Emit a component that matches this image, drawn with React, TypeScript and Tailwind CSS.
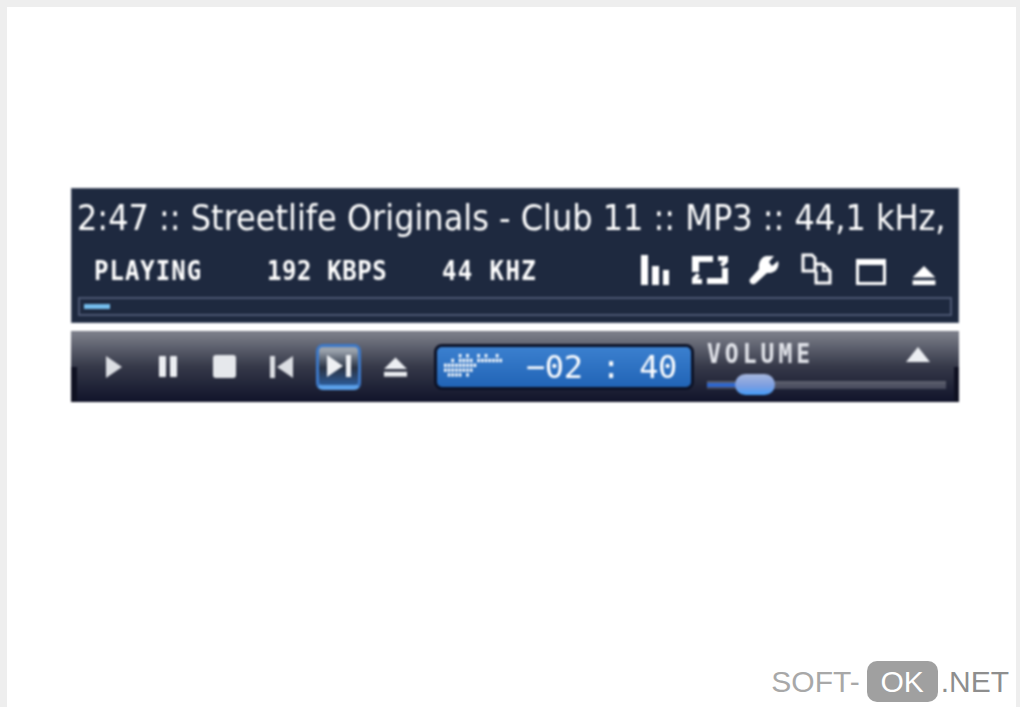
const BarsIcon = () => (
  <svg width="30" height="30" viewBox="0 0 30 30" fill="#ffffff">
    <rect x="1" y="0" width="7" height="30" />
    <rect x="12" y="11" width="7" height="19" />
    <rect x="23" y="15" width="6" height="15" />
  </svg>
);

const RepeatIcon = () => (
  <svg width="38" height="30" viewBox="0 0 38 30" fill="#ffffff">
    <path d="M1 1h21v6H8v10H1z" />
    <path d="M37 29H16v-6h15V13h6z" />
    <path d="M27 1h10v6l-5 5-3-3 3-3h-5z" />
    <path d="M11 29H1v-6l5-5 3 3-3 3h5z" />
  </svg>
);

const WrenchIcon = () => (
  <svg width="32" height="30" viewBox="0 0 32 30" fill="#ffffff">
    <path d="M18 1h8l-5 6 3 4 6-5c2 7-3 13-11 12L8 28c-3 3-8 0-6-4l9-10c-1-6 2-12 7-13z" />
  </svg>
);

const CopyIcon = () => (
  <svg width="32" height="32" viewBox="0 0 32 32" fill="none" stroke="#ffffff" strokeWidth="3">
    <path d="M2 2h9l3 3v13H2z" />
    <path d="M14 11h8l7 7v12H15v-12" />
    <path d="M22 11v7h7" strokeWidth="2" />
  </svg>
);

const WindowIcon = () => (
  <svg width="30" height="26" viewBox="0 0 30 26" fill="none" stroke="#ffffff">
    <rect x="1.5" y="1.5" width="27" height="23" strokeWidth="3" />
    <path d="M1 4.5h28" strokeWidth="3" />
  </svg>
);

const EjectIcon = ({ w, h, fill }: { w: number; h: number; fill: string }) => (
  <svg width={w} height={h} viewBox="0 0 24 20" fill={fill}>
    <path d="M12 0l12 12H0z" />
    <rect x="0" y="15" width="24" height="5" />
  </svg>
);

const PlayIcon = () => (
  <svg width="17" height="24" viewBox="0 0 17 24" fill="#dcdee3">
    <path d="M1 1l16 11L1 23z" />
  </svg>
);

const PauseIcon = () => (
  <svg width="20" height="23" viewBox="0 0 20 23" fill="#eceef2">
    <rect x="1" y="1" width="7" height="21" rx="1" />
    <rect x="12" y="1" width="7" height="21" rx="1" />
  </svg>
);

const StopIcon = () => (
  <svg width="23" height="23" viewBox="0 0 23 23" fill="#e6e8ec">
    <rect x="0" y="0" width="23" height="23" rx="3" />
  </svg>
);

const PrevIcon = () => (
  <svg width="24" height="24" viewBox="0 0 24 24" fill="#dcdee3">
    <rect x="0" y="1" width="5" height="22" />
    <path d="M23 1v22L7 12z" />
  </svg>
);

const NextIcon = () => (
  <svg width="26" height="24" viewBox="0 0 26 24" fill="#eef0f3">
    <path d="M1 1l16 11L1 23z" />
    <rect x="20" y="1" width="5" height="22" />
  </svg>
);

// start row and dot count for each column of the little wave form
const waveCols = [
  [2, 2], [2, 3], [1, 4], [2, 3], [0, 5], [1, 3], [0, 5], [1, 3], [2, 1],
  [0, 2], [1, 1], [0, 2], [1, 1], [1, 1], [0, 2], [1, 1],
];

const WaveDots = () => (
  <svg width="58" height="26" viewBox="0 0 58 26" fill="#ffffff">
    {waveCols.map(([start, count], i) =>
      Array.from({ length: count }).map((_, j) => (
        <rect key={`${i}-${j}`} x={i * 3.7} y={(start + j) * 4.8} width="2.6" height="3.4" />
      ))
    )}
  </svg>
);

export default function App() {
  return (
    <div className="w-[1020px] h-[707px] bg-white border-t-[7px] border-l-[7px] border-r-[4px] border-[#eeeeee] flex flex-col overflow-hidden font-['Liberation_Sans',sans-serif]">
      {/* player */}
      <div className="mt-[181px] ml-[64px] w-[888px] flex flex-col gap-[8px] blur-[0.8px]">
        <div className="h-[135px] bg-[#1e293f] border border-[#4a5468] px-[5px] flex flex-col">
          <div className="h-[58px] flex items-center text-white whitespace-nowrap font-['DejaVu_Sans',sans-serif] text-[32px] leading-none scale-y-[1.12]">
            2:47 :: Streetlife Originals - Club 11 :: MP3 :: 44,1 kHz,
          </div>
          <div className="h-[50px] flex items-center text-white font-['DejaVu_Sans_Mono',monospace] font-bold text-[24px] leading-none">
            <span className="ml-[17px] w-[173px] tracking-[1px] scale-y-[1.1] origin-left -mt-[3px]">PLAYING</span>
            <span className="w-[175px] tracking-[0.6px] scale-y-[1.1] origin-left -mt-[3px]">192 KBPS</span>
            <span className="tracking-[1.4px] scale-y-[1.1] origin-left -mt-[3px]">44 KHZ</span>
            <div className="ml-auto mr-[17px] mb-[6px] flex items-end">
              <BarsIcon />
              <div className="ml-[21px]"><RepeatIcon /></div>
              <div className="ml-[19px]"><WrenchIcon /></div>
              <div className="ml-[21px]"><CopyIcon /></div>
              <div className="ml-[23px]"><WindowIcon /></div>
              <div className="ml-[26px]"><EjectIcon w={24} h={19} fill="#ffffff" /></div>
            </div>
          </div>
          <div className="h-[19px] mx-[1px] border-2 border-[#4c5772] flex items-center px-[4px]">
            <div className="w-[26px] h-[5px] bg-[#74bcec]" />
          </div>
        </div>

        <div className="relative h-[71px] bg-gradient-to-b from-[#7a7d88] from-[4%] via-[#363949] via-[50%] to-[#11142a] flex items-center">
          {/* darker step at both ends of the bar */}
          <div className="absolute left-0 bottom-0 w-[6px] h-[35px] bg-[#0f1122]" />
          <div className="absolute right-0 bottom-0 w-[5px] h-[35px] bg-[#0f1122]" />
          <div className="relative ml-[34px] flex items-center">
            <PlayIcon />
            <div className="ml-[36px]"><PauseIcon /></div>
            <div className="ml-[35px]"><StopIcon /></div>
            <div className="ml-[34px]"><PrevIcon /></div>
            <div className="ml-[22px] w-[45px] h-[46px] rounded-[7px] border-[3px] border-b-[5px] border-[#3c78c8] border-b-[#5a9fe8] bg-gradient-to-b from-[#9aa2ac] from-[10%] via-[#2a3344] via-[55%] to-[#2c5a96] flex items-center justify-center">
              <NextIcon />
            </div>
            <div className="ml-[23px]"><EjectIcon w={23} h={20} fill="#eceef2" /></div>
          </div>
          <div className="relative ml-[27px] w-[260px] h-[46px] rounded-[8px] border-[3px] border-[#0c1226] bg-gradient-to-b from-[#3b80cf] to-[#2164b6] flex items-center pl-[7px]">
            <WaveDots />
            <span className="ml-[24px] font-['DejaVu_Sans_Mono',monospace] text-[32px] leading-none text-white whitespace-pre tracking-[-0.4px]">−02 : 40</span>
          </div>
          <div className="relative ml-[13px] w-[239px] h-full flex flex-col">
            <div className="mt-[12px] h-[22px] flex items-center justify-between">
              <span className="font-['DejaVu_Sans_Mono',monospace] font-bold text-[23px] leading-none text-[#e2e4ea] tracking-[4px] scale-y-[1.15]">VOLUME</span>
              <svg className="mr-[16px]" width="24" height="15" viewBox="0 0 24 15" fill="#eceef2">
                <path d="M12 0l12 15H0z" />
              </svg>
            </div>
            <div className="mt-[9px] h-[21px] relative flex items-center">
              <div className="w-full h-[8px] bg-gradient-to-b from-[#5e616e] to-[#44475a] flex">
                <div className="w-[30px] h-[4px] mt-[2px] bg-[#2e67d0]" />
              </div>
              <div className="absolute left-[28px] top-0 w-[40px] h-[21px] rounded-full bg-gradient-to-b from-[#a7b7de] via-[#7e9fe0] via-[55%] to-[#3f9bf8]" />
            </div>
          </div>
        </div>
      </div>

      {/* watermark */}
      <div className="mt-auto mb-[5px] mr-[7px] flex items-center justify-end text-[30px] leading-none whitespace-nowrap">
        <span className="text-[#a8a8a8]">SOFT-</span>
        <span className="ml-[7px] w-[71px] h-[41px] rounded-[10px] bg-[#a0a0a0] text-white flex items-center justify-center">OK</span>
        <span className="ml-[3px] text-[#8e8e8e]">.NET</span>
      </div>
    </div>
  );
}
